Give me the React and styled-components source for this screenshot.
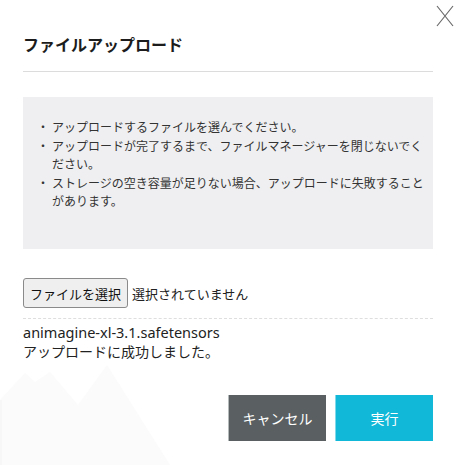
import React from "react";
import styled, { createGlobalStyle } from "styled-components";

const GlobalStyle = createGlobalStyle`
  html, body {
    margin: 0;
    padding: 0;
    background: #ffffff;
  }
  body {
    font-family: "Noto Sans CJK JP", "Noto Sans", sans-serif;
    color: #333333;
  }
`;

const Modal = styled.div`
  position: relative;
  width: 465px;
  height: 465px;
  box-sizing: border-box;
  padding: 0 32px 0 23px;
  overflow: hidden;
  background: #ffffff;
`;

const Backdrop = styled.svg`
  position: absolute;
  left: 0;
  bottom: 0;
  z-index: 0;
`;

const Content = styled.div`
  position: relative;
  z-index: 1;
  display: flex;
  flex-direction: column;
`;

const CloseButton = styled.button`
  position: absolute;
  top: 4px;
  right: 11px;
  z-index: 2;
  width: 18px;
  height: 24px;
  padding: 0;
  border: none;
  background: transparent;
  cursor: pointer;
`;

const Header = styled.div`
  padding: 32px 0 15px;
  border-bottom: 1px solid #dcdcdc;
`;

const Title = styled.h2`
  margin: 0;
  font-size: 16px;
  line-height: 24px;
  font-weight: 700;
  color: #1c1c1c;
`;

const NoticeBox = styled.ul`
  list-style: none;
  margin: 25px 0 0;
  padding: 21px 6px 39px 14px;
  background: #efeff1;
  display: flex;
  flex-direction: column;
  gap: 1px;
`;

const NoticeItem = styled.li`
  display: flex;
  font-size: 12px;
  line-height: 18px;
  color: #333333;
`;

const Bullet = styled.span`
  flex: 0 0 15px;
`;

const FileRow = styled.div`
  display: flex;
  align-items: center;
  gap: 4px;
  margin-top: 29px;
  padding-bottom: 10px;
  border-bottom: 1px dashed #dedede;
`;

const FileButton = styled.button`
  height: 30px;
  padding: 0 6px;
  font-family: inherit;
  font-size: 13px;
  color: #111111;
  background: #efefef;
  border: 1px solid #8a8a8a;
  border-radius: 3px;
`;

const FileStatus = styled.span`
  font-size: 13px;
  color: #222222;
`;

const ResultText = styled.div`
  padding-top: 4px;
  font-size: 14px;
  line-height: 19px;
  color: #222222;
`;

const FileName = styled.div`
  font-family: "Noto Sans", "Noto Sans CJK JP", sans-serif;
  font-size: 14.5px;
`;

const Actions = styled.div`
  display: flex;
  justify-content: flex-end;
  gap: 9px;
  margin-top: 34px;
`;

const ActionButton = styled.button`
  width: 98px;
  height: 46px;
  border: none;
  border-left: 1px solid ${({ $edge }) => $edge};
  background: ${({ $bg }) => $bg};
  color: #ffffff;
  font-family: inherit;
  font-size: 14px;
  cursor: pointer;
`;

const notices = [
  "アップロードするファイルを選んでください。",
  "アップロードが完了するまで、ファイルマネージャーを閉じないでください。",
  "ストレージの空き容量が足りない場合、アップロードに失敗することがあります。",
];

const App = () => {
  return (
    <Modal>
      <GlobalStyle />
      <Backdrop width="200" height="110" viewBox="0 0 200 110">
        <polygon
          points="0,45 25,18 35,27 50,17 78,50 107,10 170,110 0,110"
          fill="#fbfbfb"
        />
        <rect x="0" y="45" width="2" height="65" fill="#f7f7f7" />
      </Backdrop>
      <CloseButton aria-label="閉じる">
        <svg width="18" height="24" viewBox="0 0 18 24">
          <path d="M1 2 L17 22 M17 2 L1 22" stroke="#6a6a6a" strokeWidth="1.2" fill="none" />
        </svg>
      </CloseButton>
      <Content>
        <Header>
          <Title>ファイルアップロード</Title>
        </Header>
        <NoticeBox>
          {notices.map((text) => (
            <NoticeItem key={text}>
              <Bullet>・</Bullet>
              <span>{text}</span>
            </NoticeItem>
          ))}
        </NoticeBox>
        <FileRow>
          <FileButton>ファイルを選択</FileButton>
          <FileStatus>選択されていません</FileStatus>
        </FileRow>
        <ResultText>
          <FileName>animagine-xl-3.1.safetensors</FileName>
          アップロードに成功しました。
        </ResultText>
        <Actions>
          <ActionButton $bg="#5a6061" $edge="#b4b9ba">キャンセル</ActionButton>
          <ActionButton $bg="#12b8d7" $edge="#7fd9ea">実行</ActionButton>
        </Actions>
      </Content>
    </Modal>
  );
};

export default App;
